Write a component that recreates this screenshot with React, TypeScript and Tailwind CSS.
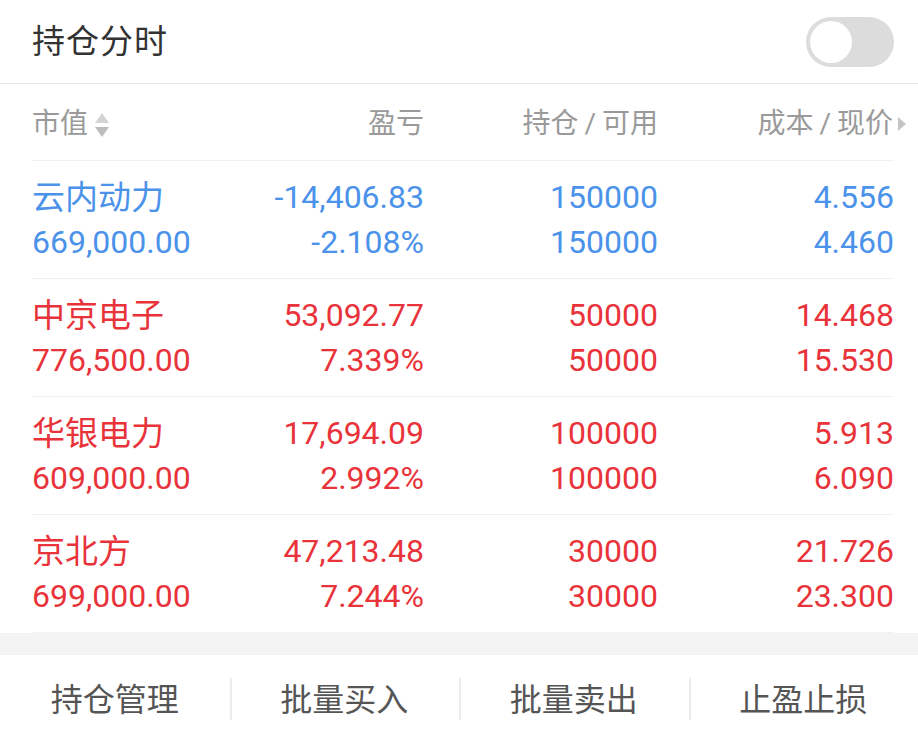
import React from 'react';

type Row = {
  name: string;
  value: string;
  profit: string;
  ratio: string;
  hold: string;
  avail: string;
  cost: string;
  price: string;
  up: boolean;
};

const rows: Row[] = [
  { name: '云内动力', value: '669,000.00', profit: '-14,406.83', ratio: '-2.108%', hold: '150000', avail: '150000', cost: '4.556', price: '4.460', up: false },
  { name: '中京电子', value: '776,500.00', profit: '53,092.77', ratio: '7.339%', hold: '50000', avail: '50000', cost: '14.468', price: '15.530', up: true },
  { name: '华银电力', value: '609,000.00', profit: '17,694.09', ratio: '2.992%', hold: '100000', avail: '100000', cost: '5.913', price: '6.090', up: true },
  { name: '京北方', value: '699,000.00', profit: '47,213.48', ratio: '7.244%', hold: '30000', avail: '30000', cost: '21.726', price: '23.300', up: true },
];

const font = { fontFamily: 'Roboto, "Noto Sans CJK SC", sans-serif' };

// grid columns shared by head and rows
const cols = 'grid grid-cols-[130px_262px_234px_236px]';

function Toggle() {
  return (
    <div className="w-[88px] h-[50px] rounded-full bg-[#dcdcdc] p-[4px] flex items-center">
      <div className="w-[42px] h-[42px] rounded-full bg-white" />
    </div>
  );
}

function SortIcon() {
  return (
    <svg width="16" height="28" viewBox="0 0 16 28" className="ml-[6px] mt-[2px]">
      <polygon points="8,2 15,12 1,12" fill="#d4d4d4" />
      <polygon points="1,16 15,16 8,26" fill="#bdbdbd" />
    </svg>
  );
}

export default function App() {
  return (
    <div className="w-[918px] h-[734px] bg-white flex flex-col overflow-hidden" style={font}>
      {/* title bar */}
      <div className="h-[84px] shrink-0 flex items-center justify-between pl-[32px] pr-[24px] border-b border-[#e8e8e8]">
        <span className="text-[33px] text-[#333333] tracking-[1px]">持仓分时</span>
        <Toggle />
      </div>

      <div className="pl-[32px] pr-[24px]">
        {/* table head */}
        <div className={`h-[77px] pt-[4px] ${cols} items-center text-[28px] text-[#9a9a9a] border-b border-[#f1f1f1]`}>
          <div className="flex items-center">
            市值
            <SortIcon />
          </div>
          <div className="text-right">盈亏</div>
          <div className="text-right">
            持仓<span className="mx-[6px]">/</span>可用
          </div>
          <div className="flex items-center justify-end mr-[-14px]">
            成本<span className="mx-[6px]">/</span>现价
            <svg width="12" height="18" viewBox="0 0 12 18" className="ml-[3px]">
              <polygon points="2,2 10,9 2,16" fill="#c4c4c4" />
            </svg>
          </div>
        </div>

        {rows.map((r) => (
          <div
            key={r.name}
            className={`pt-[14px] pb-[13px] ${cols} border-b border-[#f1f1f1] text-[32px] leading-[45px] ${
              r.up ? 'text-[#e8333a]' : 'text-[#4b92ea]'
            }`}
          >
            <div className="flex flex-col whitespace-nowrap">
              <span className="text-[33px]">{r.name}</span>
              <span>{r.value}</span>
            </div>
            <div className="flex flex-col items-end">
              <span>{r.profit}</span>
              <span>{r.ratio}</span>
            </div>
            <div className="flex flex-col items-end">
              <span>{r.hold}</span>
              <span>{r.avail}</span>
            </div>
            <div className="flex flex-col items-end">
              <span>{r.cost}</span>
              <span>{r.price}</span>
            </div>
          </div>
        ))}
      </div>

      <div className="h-[22px] bg-[#f4f4f4] mt-auto" />

      {/* bottom actions */}
      <div className="h-[79px] grid grid-cols-4 text-[32px] text-[#555555]">
        {['持仓管理', '批量买入', '批量卖出', '止盈止损'].map((t, i) => (
          <div key={t} className="relative flex items-center justify-center h-full pt-[10px]">
            {i > 0 && <div className="absolute left-0 top-[23px] h-[42px] w-[2px] bg-[#ececec]" />}
            <span>{t}</span>
          </div>
        ))}
      </div>
    </div>
  );
}
